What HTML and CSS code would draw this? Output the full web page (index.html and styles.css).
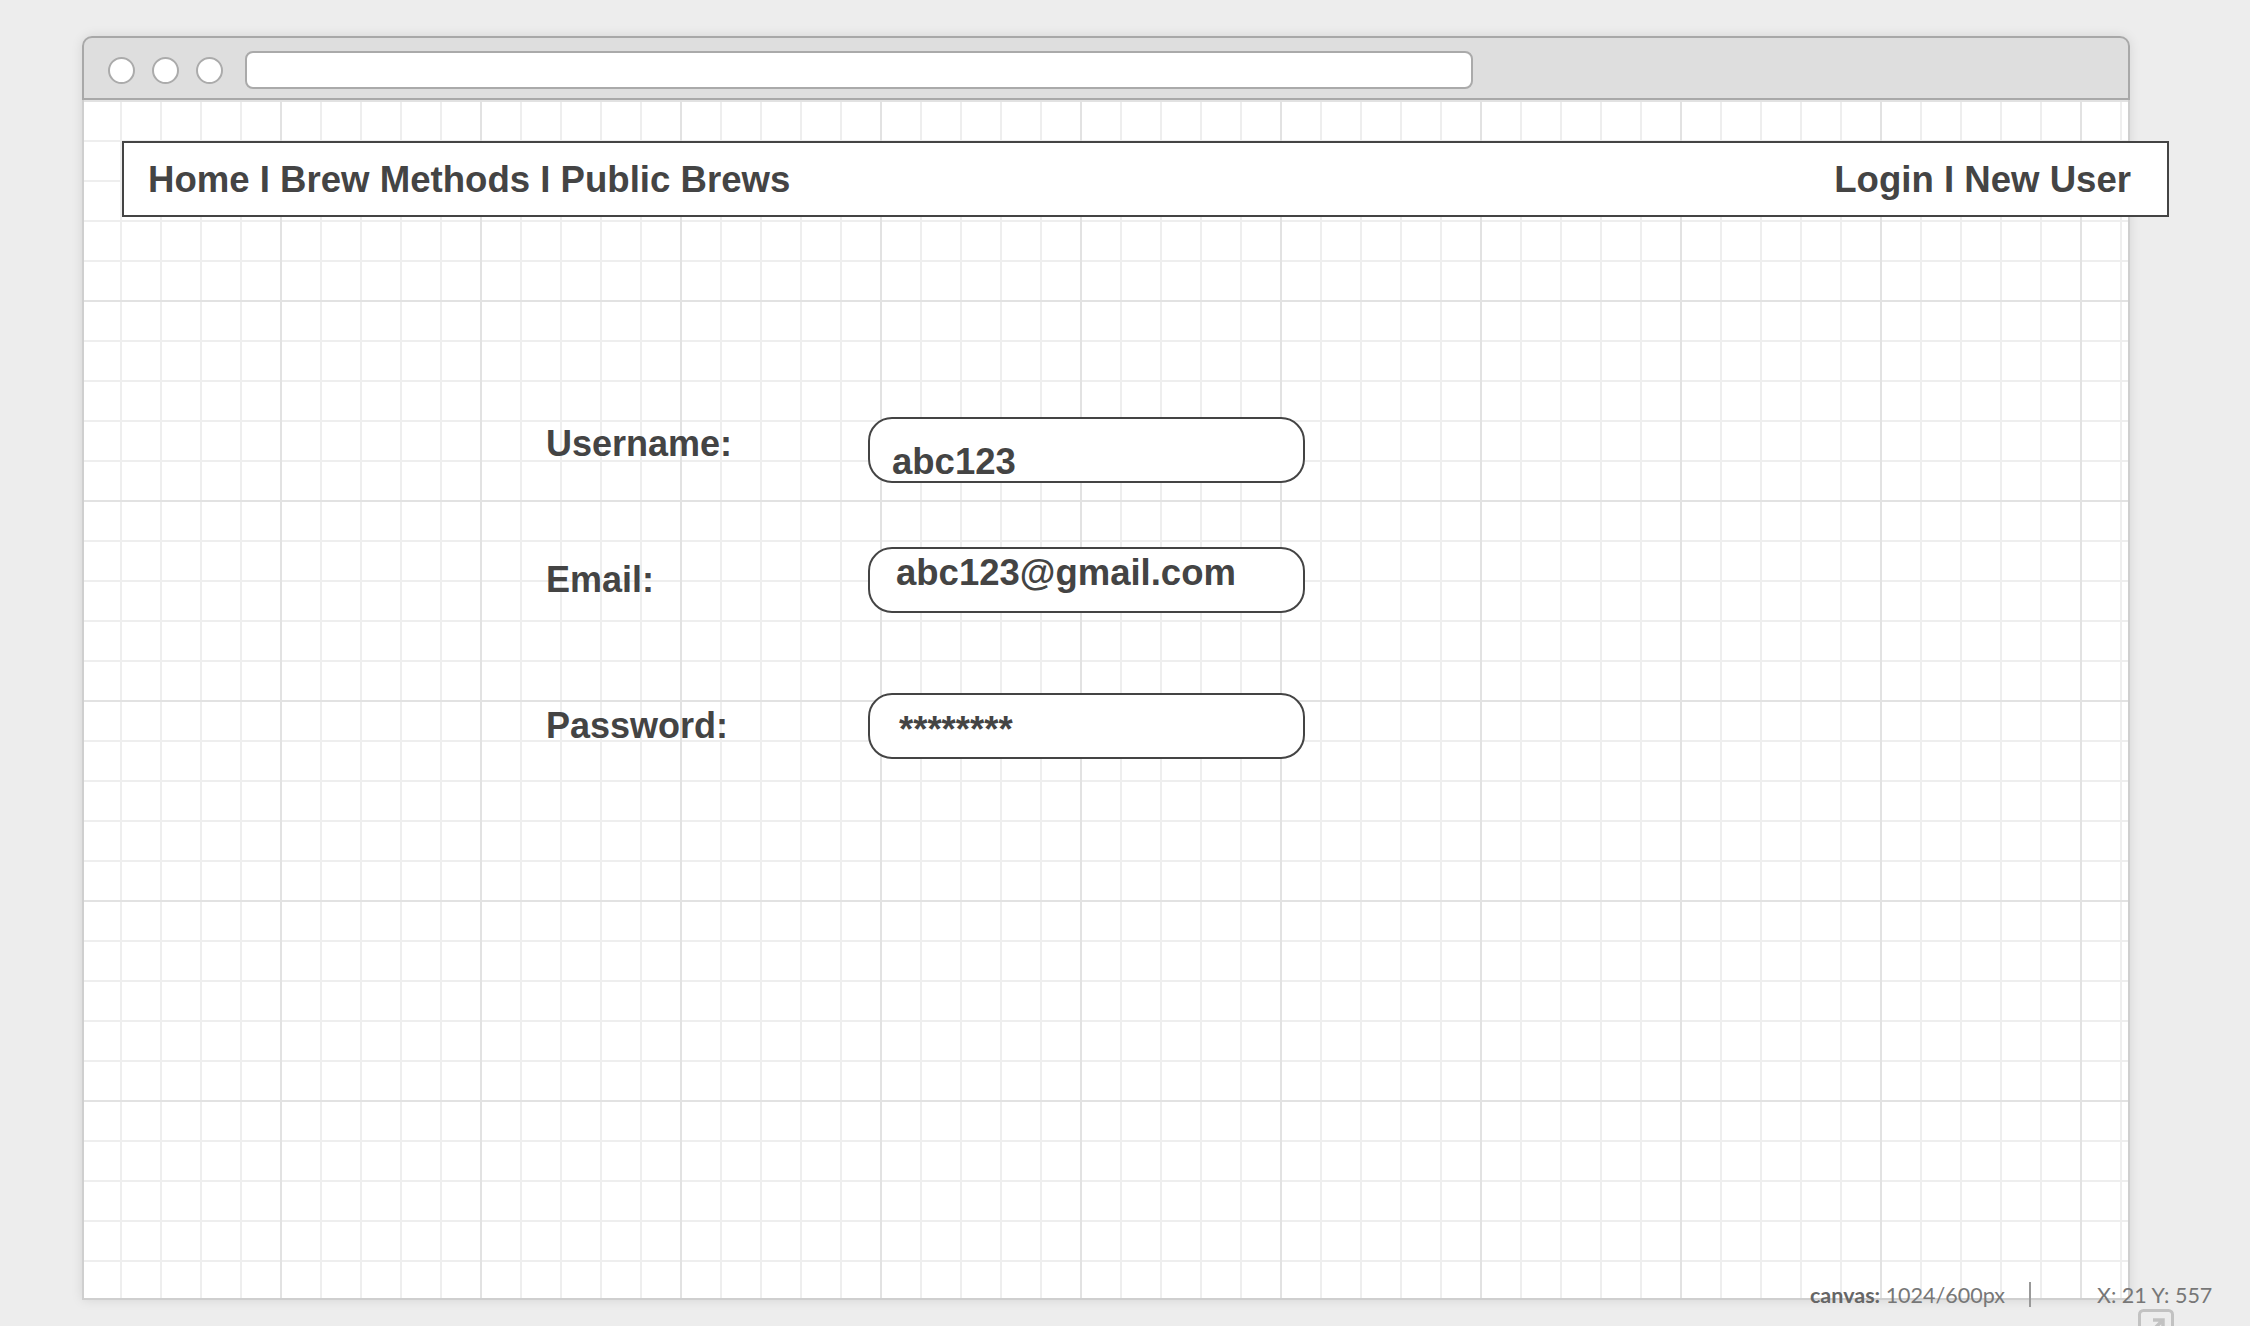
FILE: index.html
```html
<!DOCTYPE html>
<html lang="en">
<head>
<meta charset="utf-8">
<title>Wireframe – New User</title>
<link rel="stylesheet" href="styles.css">
</head>
<body>
<div class="frame">
  <div class="chrome">
    <span class="dot"></span>
    <span class="dot"></span>
    <span class="dot"></span>
    <div class="url"></div>
  </div>
  <div class="canvas">
    <nav class="nav">
      <div class="nav-left">Home I Brew Methods I Public Brews</div>
      <div class="nav-right">Login I New User</div>
    </nav>
    <form class="form">
      <div class="row row-user">
        <label class="label">Username:</label>
        <div class="field">abc123</div>
      </div>
      <div class="row row-email">
        <label class="label">Email:</label>
        <div class="field">abc123@gmail.com</div>
      </div>
      <div class="row row-pass">
        <label class="label">Password:</label>
        <div class="field">********</div>
      </div>
    </form>
  </div>
</div>
<div class="status">
  <span class="st-key">canvas:</span><span class="st-val">&nbsp;1024/600px</span>
  <span class="st-sep"></span>
  <span class="st-pos">X: 21 Y: 557</span>
  <svg class="st-icon" width="36" height="36" viewBox="0 0 36 36">
    <rect x="1.5" y="1.5" width="33" height="33" rx="4" fill="none" stroke="#c2c2c2" stroke-width="3"/>
    <path d="M11 25 L24 12 M15 11 H25 V21" fill="none" stroke="#c2c2c2" stroke-width="3.5"/>
  </svg>
</div>
</body>
</html>
```

FILE: styles.css
```css
* { box-sizing: border-box; }
html, body { margin: 0; padding: 0; }
body {
  width: 2250px;
  height: 1326px;
  overflow: hidden;
  position: relative;
  background: #ededed;
  font-family: "Liberation Sans", Arial, sans-serif;
  color: #444;
}
.frame {
  margin: 36px 0 0 82px;
  width: 2048px;
  border-radius: 10px 10px 0 0;
  box-shadow: 0 0 12px rgba(0, 0, 0, 0.10);
}
.chrome {
  height: 64px;
  background: #dedede;
  border: 2px solid #a8a8a8;
  border-radius: 10px 10px 0 0;
  display: flex;
  align-items: center;
  padding: 4px 0 0 24px;
}
.dot {
  width: 27px;
  height: 27px;
  border: 2px solid #ababab;
  border-radius: 50%;
  background: #fff;
  margin-right: 17px;
  flex: none;
}
.dot:nth-child(3) { margin-right: 22px; }
.url {
  width: 1228px;
  height: 38px;
  border: 2px solid #aaaaaa;
  border-radius: 8px;
  background: #fff;
}
.canvas {
  height: 1200px;
  border: 2px solid #cfcfcf;
  border-top: none;
  background-color: #fff;
  background-image:
    linear-gradient(to right, #e2e2e2 0, #e2e2e2 2px, transparent 2px),
    linear-gradient(to bottom, #e2e2e2 0, #e2e2e2 2px, transparent 2px),
    linear-gradient(to right, #eeeeee 0, #eeeeee 2px, transparent 2px),
    linear-gradient(to bottom, #eeeeee 0, #eeeeee 2px, transparent 2px);
  background-size: 200px 100%, 100% 200px, 40px 100%, 100% 40px;
  background-position: 196px 0, 0 0, 36px 0, 0 0;
  padding-top: 41px;
}
.nav {
  margin-left: 38px;
  width: 2047px;
  height: 76px;
  border: 2px solid #444;
  background: #fff;
  display: flex;
  justify-content: space-between;
  align-items: center;
  padding: 2px 36px 0 24px;
  font-size: 36.6px;
  font-weight: bold;
  line-height: 72px;
}
.form {
  margin: 200px 0 0;
  padding-left: 462px;
}
.row {
  display: flex;
  align-items: flex-start;
}
.label {
  width: 322px;
  font-size: 36px;
  font-weight: bold;
  line-height: 36px;
}
.field {
  width: 437px;
  height: 66px;
  border: 2px solid #444;
  border-radius: 24px;
  background: #fff;
  font-size: 36.5px;
  font-weight: bold;
  line-height: 36px;
  white-space: nowrap;
}
.row-user .label { margin-top: 8.5px; }
.row-user .field { padding: 24.5px 0 0 22px; }
.row-email { margin-top: 64px; }
.row-email .label { margin-top: 15px; }
.row-email .field { padding: 6px 0 0 26px; }
.row-pass { margin-top: 80px; }
.row-pass .label { margin-top: 15px; }
.row-pass .field { padding: 16.5px 0 0 29px; }

.status {
  position: absolute;
  left: 1810px;
  top: 1282px;
  display: flex;
  align-items: flex-start;
  font-family: Lato, "Open Sans", sans-serif;
  font-size: 21.5px;
  line-height: 26px;
  color: #777;
}
.st-key { font-weight: bold; color: #666; }
.st-val { color: #777; }
.st-sep {
  width: 2px;
  height: 25px;
  background: #999;
  margin-left: 24px;
}
.st-pos { margin-left: 66px; }
.st-icon {
  position: absolute;
  left: 328px;
  top: 27px;
}
```
